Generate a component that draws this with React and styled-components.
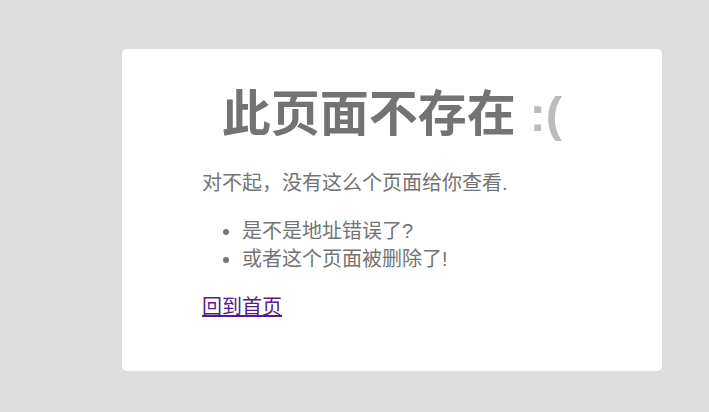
import React from "react";
import styled, { createGlobalStyle } from "styled-components";

const Global = createGlobalStyle`
  html, body {
    margin: 0;
    padding: 0;
    background: #dddddd;
  }
  body {
    font-family: "Liberation Sans", "Noto Sans CJK SC", sans-serif;
    font-size: 20px;
    line-height: 1.4;
    color: #737373;
  }
`;

const Page = styled.div`
  min-height: 100vh;
  box-sizing: border-box;
  padding: 49px 0 0 122px;
`;

const Card = styled.main`
  width: 500px;
  padding: 30px 20px 50px;
  background: #ffffff;
  border-radius: 5px;
`;

const Title = styled.h1`
  margin: 0 10px;
  font-size: 49px;
  line-height: 70px;
  font-weight: bold;
  text-align: center;
  color: #737373;
`;

const Sad = styled.span`
  color: #bbbbbb;
`;

const Container = styled.div`
  max-width: 380px;
  margin: 0 auto;
`;

const Text = styled.p`
  margin: 20px 0;
  &:last-child {
    margin-bottom: 0;
  }
`;

const List = styled.ul`
  margin: 20px 0;
  padding: 0 0 0 40px;
`;

const HomeLink = styled.a`
  color: #551a8b;
  text-decoration: underline;
`;

export default function App() {
  return (
    <>
      <Global />
      <Page>
        <Card>
          <Title>
            此页面不存在 <Sad>:(</Sad>
          </Title>
          <Container>
            <Text>对不起，没有这么个页面给你查看.</Text>
            <List>
              <li>是不是地址错误了?</li>
              <li>或者这个页面被删除了!</li>
            </List>
            <Text>
              <HomeLink href="#">回到首页</HomeLink>
            </Text>
          </Container>
        </Card>
      </Page>
    </>
  );
}
